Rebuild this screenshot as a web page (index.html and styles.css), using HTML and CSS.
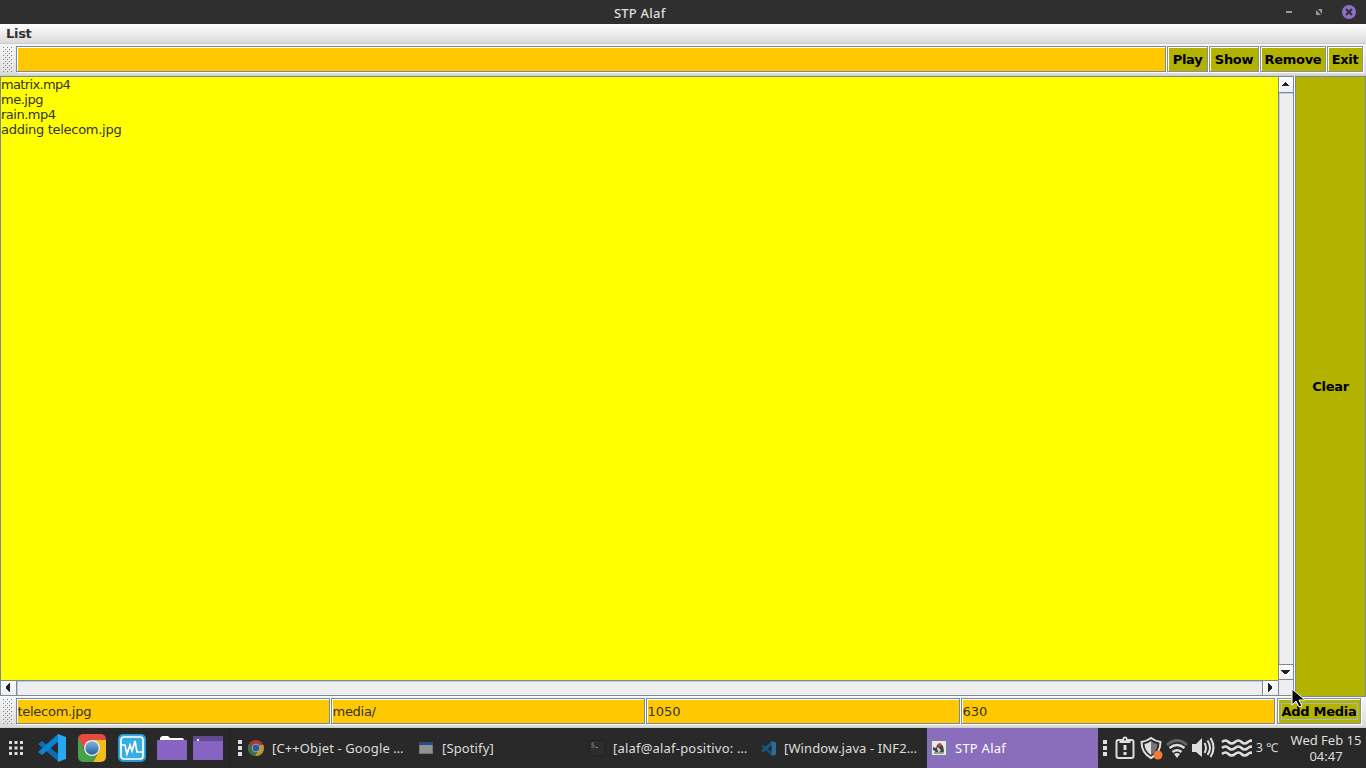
FILE: index.html
```html
<!DOCTYPE html>
<html lang="en">
<head>
<meta charset="utf-8">
<title>STP Alaf</title>
<link rel="stylesheet" href="styles.css">
</head>
<body>
<svg class="defs" width="0" height="0">
  <defs>
    <pattern id="dots" width="4" height="4" patternUnits="userSpaceOnUse">
      <path fill="#fff" d="M0 0h1v1h-1zM2 2h1v1h-1z"/>
      <path fill="#7a7a7a" d="M1 1h1v1h-1zM3 3h1v1h-1z"/>
    </pattern>
    <symbol id="code" viewBox="0 0 28 28">
      <path fill="#0a6eb5" d="M0 10 4 7 21 21v7z"/>
      <path fill="#0a84d0" d="M20 0l1 7L4 21l-4-3z"/>
      <path fill="#29a8f2" d="M20 0l8 3v22l-8 3z"/>
    </symbol>
  </defs>
</svg>
<div class="screen">
  <header class="titlebar">
    <span class="title">STP Alaf</span>
    <svg class="controls" width="86" height="24">
      <path fill="#9a9a9a" d="M6 11h6v2H6zM38 9h4v5zM36 10v5h5z"/>
      <circle cx="69" cy="12" r="7" fill="#8f6fc8"/>
      <path stroke="#2f2f2f" stroke-width="2" d="M66 9l6 6M72 9l-6 6"/>
    </svg>
  </header>
  <nav class="menubar">List</nav>
  <div class="toolbar top">
    <svg class="grip" width="11" height="26"><rect width="11" height="26" fill="url(#dots)"/></svg>
    <div class="field grow"></div>
    <div class="btn play">Play</div>
    <div class="btn show">Show</div>
    <div class="btn remove">Remove</div>
    <div class="btn exit">Exit</div>
  </div>
  <main class="center">
    <div class="scrollpane">
      <div class="textarea"><div class="tight">matrix.mp4</div><div class="snug">me.jpg</div><div class="snug">rain.mp4</div><div class="close">adding telecom.jpg</div></div>
      <div class="vbar">
        <div class="arrow up"><svg width="9" height="4"><path d="M4 0h1v1h1v1h1v1h1v1H1V3h1V2h1V1h1z"/></svg></div>
        <div class="track"></div>
        <div class="arrow down"><svg width="9" height="4"><path d="M0 0h9v1H8v1H7v1H6v1H3V3H2V2H1V1H0z"/></svg></div>
      </div>
      <div class="hbar">
        <div class="arrow left"><svg width="4" height="9"><path d="M4 0v9H3V8H2V7H1V6H0V3h1V2h1V1h1V0z"/></svg></div>
        <div class="track"></div>
        <div class="arrow right"><svg width="4" height="9"><path d="M0 0h1v1h1v1h1v1h1v3H3v1H2v1H1v1H0z"/></svg></div>
      </div>
      <div class="corner"></div>
    </div>
    <div class="btn clear">Clear</div>
  </main>
  <div class="toolbar bottom">
    <svg class="grip" width="11" height="26"><rect width="11" height="26" fill="url(#dots)"/></svg>
    <div class="field quarter close">telecom.jpg</div>
    <div class="field quarter close">media/</div>
    <div class="field quarter">1050</div>
    <div class="field quarter">630</div>
    <div class="btn add"><span class="focus">Add Media</span></div>
  </div>
  <footer class="taskbar">
    <div class="launchers">
      <svg class="apps" width="15" height="14"><path fill="#dedede" d="M0 0h3v3H0zM5.500 0h3v3h-3zM11 0h3v3h-3zM0 5.500h3v3H0zM5.500 5.500h3v3h-3zM11 5.500h3v3h-3zM0 11h3v3H0zM5.500 11h3v3h-3zM11 11h3v3h-3z"/></svg>
      <svg class="vscode" width="28" height="28"><use href="#code"/></svg>
      <svg class="chrome" width="28" height="28" viewBox="0 0 28 28">
        <defs><clipPath id="sq"><rect width="28" height="28" rx="5"/></clipPath>
        <linearGradient id="blue" x2="0" y2="1"><stop stop-color="#83b3df"/><stop offset="1" stop-color="#25629f"/></linearGradient></defs>
        <g clip-path="url(#sq)"><path fill="#e44b3e" d="M0 0h28v7H14L7 16 0 6z"/><path fill="#f2bd1b" d="M14 6h14v22H15l6-11z"/><path fill="#48a04a" d="M0 3l7 14 7 4 5-1-4 8H0z"/></g>
        <circle cx="14" cy="14" r="8" fill="#eee"/><circle cx="14" cy="14" r="6.700" fill="url(#blue)"/>
      </svg>
      <svg class="monitor" width="28" height="28">
        <rect width="28" height="28" rx="5" fill="#2499ca"/><rect x="1" y="1" width="26" height="25" rx="4" fill="#36ade0"/>
        <rect x="3" y="3" width="22" height="22" rx="3" fill="none" stroke="#fff" stroke-width="1.700"/>
        <path fill="none" stroke="#fff" stroke-width="1.700" d="M3 11h4l2 9 3-9 2 6 3-10 2 11h6"/>
      </svg>
      <svg class="folder" width="30" height="24"><path fill="#fff" d="M3 4V2l2-2h6l2 2h13l1 2z"/><rect y="4" width="30" height="20" rx="1" fill="#8763c2"/></svg>
      <svg class="window" width="30" height="24"><rect width="30" height="24" rx="1" fill="#8763c2"/><path fill="#634993" d="M0 0h30v5H0z"/><path fill="#fff" d="M4 3h2v2H4z"/></svg>
    </div>
    <div class="tasks">
      <svg class="handle" width="4" height="16"><path fill="#dedede" d="M0 0h4v4H0zM0 6h4v4H0zM0 12h4v4H0z"/></svg>
      <div class="task t1">
        <svg width="16" height="16"><circle cx="8" cy="8" r="8" fill="#a93b33"/><path fill="#b7972e" d="M8 5h7.400A8 8 0 0 1 7 16l4-7z"/><path fill="#357547" d="M1 4l4 6 5 1-3 5A8 8 0 0 1 1 4z"/><circle cx="8" cy="8" r="4.200" fill="#bbb"/><circle cx="8" cy="8" r="3.400" fill="#285b9d"/></svg>
        <span class="label">[C++Objet - Google …</span>
      </div>
      <div class="task t2">
        <svg width="16" height="16"><rect x="1" y="2" width="14" height="12" fill="#777"/><path fill="#284f82" d="M1 2h14v3H1z"/><path fill="#929292" d="M2 5h12v8H2z"/></svg>
        <span class="label">[Spotify]</span>
      </div>
      <div class="task t3">
        <svg width="16" height="16"><rect x=".5" y=".5" width="15" height="15" rx="2" fill="#2d2d2d" stroke="#232323"/><path fill="none" stroke="#777" d="M5 3H3v2h2v2H2M6 7.500h3"/></svg>
        <span class="label">[alaf@alaf-positivo: …</span>
      </div>
      <div class="task t4">
        <svg class="dim" width="15" height="15"><use href="#code"/></svg>
        <span class="label">[Window.java - INF2…</span>
      </div>
      <div class="task active">
        <svg width="16" height="16"><rect x=".5" y=".5" width="15" height="15" fill="#e6e9e9" stroke="#6f8791"/><path fill="#444" d="M2 7l3 1 1-3 3-2 3 3 1 5-1 3H5l-1-3-2-1z"/><path fill="#ddd" d="M6 7l2 1 2 3-3 1z"/><path fill="#999" d="M3 12h9v2H3z"/><circle cx="8.500" cy="5" r="1.800" fill="#e13737"/></svg>
        <span class="label">STP Alaf</span>
      </div>
    </div>
    <div class="tray">
      <svg class="trayicons" width="154" height="40" fill="none" stroke="#dedede">
        <path fill="#dedede" stroke="none" d="M5 12h4v4H5zM5 18h4v4H5zM5 24h4v4H5z"/>
        <g transform="translate(1.500 0)">
          <rect x="17" y="12" width="17" height="18" rx="2" stroke-width="2"/><path fill="#dedede" stroke="none" d="M20 11h3a2.500 2.500 0 0 1 5 0h3v4H20zM24 17h3v5h-3zM24 24h3v3h-3z"/><circle cx="25.500" cy="11.500" r="1" fill="#292929" stroke="none"/>
          <path stroke-width="2" d="M51.500 10q-4 3-9.500 4 0 11 9.500 16 9.500-5 9.500-16-5.500-1-9.500-4z"/><path fill="#dedede" stroke="none" d="M51.500 13v14q-6.500-4-6.500-11 3 0 6.500-3z"/><path fill="#777" stroke="none" d="M51.500 13q3 3 6.500 3 0 7-6.500 11z"/><circle cx="58.500" cy="27" r="4.500" fill="#f47b35" stroke="none"/>
          <path stroke="#656565" stroke-width="3" d="M67.500 17q10-9 20 0"/><path stroke-width="2.500" d="M70 20q7.500-6 15 0M73 24q4.500-3.500 9 0"/><path fill="#dedede" stroke="none" d="M74.500 26q3-2 6 0l-3 4z"/>
          <path fill="#dedede" stroke="none" d="M92.500 16h4l6-6v19l-6-5h-4z"/><path stroke-width="2" d="M105 15q3 5 0 10M108 12.500q5 7 0 14.500M111 10q6 9.500 0 19"/>
        </g>
        <path stroke-width="2.600" d="M124 14q3.500-3 6.500 0t6.500 0 6.500 0 6.500 0 4 0M124 20q3.500-3 6.500 0t6.500 0 6.500 0 6.500 0 4 0M124 26q3.500-3 6.500 0t6.500 0 6.500 0 6.500 0 4 0"/>
      </svg>
      <span class="temp">3 ℃</span>
      <div class="clock"><div class="date">Wed Feb 15</div><div class="time">04:47</div></div>
    </div>
  </footer>
  <svg class="cursor" width="18" height="22"><path fill="#080808" stroke="#fff" d="M2 1v16l4-4 3 6 3-1-3-6h6z"/></svg>
</div>
</body>
</html>
```
FILE: styles.css
```css
* { box-sizing: border-box; }
body { margin: 0; overflow: hidden; font: 13px/15px "DejaVu Sans", sans-serif; color: #333; }
svg { display: block; flex: none; }
.defs { position: absolute; }
.screen { position: relative; width: 1366px; height: 768px; display: flex; flex-direction: column; background: #eee; }
.titlebar { height: 24px; background: #2f2f2f; display: grid; grid-template-columns: 1fr 86px; color: #dedede; font: 500 13px/26px "Noto Sans", sans-serif; }
.title { padding-left: 614px; white-space: nowrap; letter-spacing: 0.2px; }
.menubar { height: 20px; padding: 2px 6px; font-weight: bold; letter-spacing: -0.3px; background: linear-gradient(#fff, #dadada); border-bottom: 1px solid #ccc; }
.toolbar { display: flex; flex: none; background: linear-gradient(#f6f6f6, #dadada); padding-left: 2px; }
.toolbar.top { height: 32px; padding-top: 2px; padding-right: 2px; border-bottom: 1px solid #ccc; }
.toolbar.bottom { height: 31px; padding-top: 1px; padding-right: 4px; border-bottom: 1px solid #ccc; }
.grip { margin-right: 3px; }
.field { height: 26px; margin-right: 1px; background: #ffc800; border: 1px solid #7a8a99; box-shadow: 1px 1px #fff, inset 1px 1px #fff; line-height: 25px; padding-left: 0.5px; white-space: nowrap; }
.grow { flex: 1 1 0; }
.quarter { flex: none; width: 314px; }
.btn { height: 26px; margin-right: 1px; background: #b2b200; border: 1px solid #8a8f91; box-shadow: 1px 1px #fff, inset 1px 1px #fff; display: flex; align-items: center; justify-content: center; color: #000; font-weight: bold; letter-spacing: -0.3px; white-space: nowrap; }
.tight { letter-spacing: -0.65px; }
.snug { letter-spacing: -0.5px; }
.close { letter-spacing: -0.28px; }
.play { width: 41px; }
.show { width: 50px; }
.remove { width: 66px; }
.exit { width: 36px; }
.add { width: 84px; margin-left: 1px; }
.focus { border: 1px solid #a3b8cc; height: 17px; line-height: 15px; width: 77px; display: flex; justify-content: center; }
.center { height: 621px; flex: none; display: flex; background: #fff; }
.scrollpane { width: 1294px; height: 620px; border: 1px solid #7a8a99; display: grid; grid-template-columns: 1277px 15px; grid-template-rows: 603px 15px; background: #eee; }
.textarea { background: #ff0; }
.vbar { border-left: 1px solid #7a8a99; display: flex; flex-direction: column; }
.hbar { border-top: 1px solid #7a8a99; display: flex; }
.track { flex: 1; background: #eee; box-shadow: inset 1px 1px #b8cfe5; }
.arrow { flex: none; display: flex; align-items: center; justify-content: center; background: linear-gradient(#fff, #eee); box-shadow: inset 1px 1px #fff; }
.arrow svg { fill: #222; }
.up { height: 16px; padding: 0 1px 1px 0; border-bottom: 1px solid #7a8a99; }
.down { height: 16px; padding-right: 1px; border-top: 1px solid #7a8a99; border-bottom: 1px solid #7a8a99; }
.left { width: 16px; padding: 0 1px 1px 0; border-right: 1px solid #7a8a99; }
.right { width: 16px; padding: 0 1px 1px 0; border-left: 1px solid #7a8a99; }
.corner { border-left: 1px solid #7a8a99; border-top: 1px solid #eee; }
.clear { margin-left: 1px; margin-right: 0; width: 71px; height: 621px; border-color: #7a8a99; box-shadow: none; }
.taskbar { height: 40px; flex: none; display: flex; background: #292929; color: #dedede; font: 13px/40px "Noto Sans", sans-serif; }
.launchers { width: 230px; display: flex; align-items: center; border-right: 1px solid #222; padding-left: 9px; }
.vscode { margin-left: 14px; }
.chrome { margin-left: 12px; }
.monitor { margin-left: 12px; }
.folder { margin-left: 11px; }
.window { margin-left: 6px; }
.tasks { width: 868px; display: flex; align-items: center; padding-left: 8px; }
.handle { margin-right: 6px; }
.task { display: flex; align-items: center; gap: 8px; height: 40px; white-space: nowrap; }
.task .label { letter-spacing: 0.12px; }
.t3 .label { letter-spacing: 0.2px; }
.active .label { letter-spacing: 0.25px; }
.t1 { width: 170px; }
.t2 { width: 171px; }
.t3 { width: 172px; }
.t4 { width: 166px; }
.dim { opacity: .55; }
.active { width: 171px; background: #8a6dbb; padding-left: 4px; color: #fff; }
.tray { width: 268px; display: flex; }
.temp { width: 24px; margin-left: 4px; white-space: nowrap; font-size: 12px; }
.clock { width: 76px; margin-left: 8px; padding-top: 4px; line-height: 16px; text-align: center; white-space: nowrap; }
.trayicons { width: 154px; }
.cursor { position: absolute; left: 1290px; top: 688px; }
```
